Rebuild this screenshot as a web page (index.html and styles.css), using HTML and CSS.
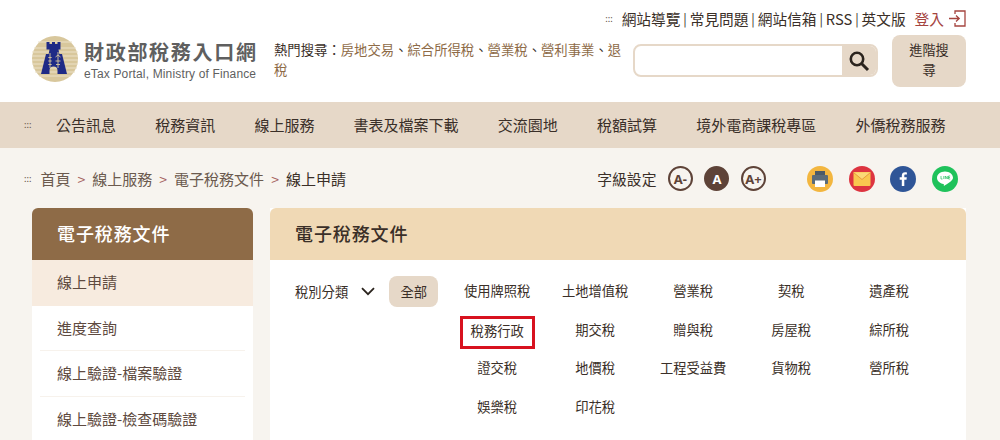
FILE: index.html
```html
<!DOCTYPE html>
<html lang="zh-Hant">
<head>
<meta charset="utf-8">
<title>電子稅務文件</title>
<link rel="stylesheet" href="styles.css">
</head>
<body>
<header class="header">
  <div class="toplinks">
    <span class="dots">:::</span>
    <a>網站導覽</a><i>|</i><a>常見問題</a><i>|</i><a>網站信箱</a><i>|</i><a>RSS</a><i>|</i><a>英文版</a>
    <span class="login">登入
      <svg width="17" height="17" viewBox="0 0 17 17" fill="none" stroke="#a5443f" stroke-width="1.3"><path d="M6 4V1h10v15H6v-3"/><path d="M0 8.500h10M7 5.500l3.200 3-3.200 3"/></svg>
    </span>
  </div>
  <div class="mainrow">
    <div class="logo">
      <svg width="46" height="46" viewBox="0 0 46 46">
        <circle cx="23" cy="23" r="23" fill="#d8c79c"/>
        <path d="M6 6h34M2 12h42M0 16h46M0 20h46M0 24h46M0 28h46M1 32h44M3 36h40M7 40h32" stroke="#ebe2c8" stroke-width="1.100"/>
        <path d="M14.500 6h3v2h2.500V6h3v2h2.500V6h3v7.500h-2l.8 4.500h2.700l5 20H25.500v-3.500a4 4 0 0 0-8 0V38H9l5-20h2.700l.8-4.500h-3z" fill="#1e2a86"/>
        <path d="M18 17v15M16.300 21.500h3.400M16.300 25h3.400M16.300 28.500h3.400M26 16v16M23.500 21l2.500-2 2.500 2M23.500 25h5M24 28.500h4" stroke="#d8c79c" stroke-width=".9" fill="none"/>
      </svg>
      <div class="logotext">
        <strong>財政部稅務入口網</strong>
        <span>eTax Portal, Ministry of Finance</span>
      </div>
    </div>
    <p class="hot">熱門搜尋：<a>房地交易</a>、<a>綜合所得稅</a>、<a>營業稅</a>、<a>營利事業</a>、<a>退稅</a></p>
    <div class="search">
      <div class="field"></div>
      <div class="sbtn">
        <svg width="22" height="22" viewBox="0 0 22 22" fill="none" stroke="#2b241e"><circle cx="9" cy="9" r="6.200" stroke-width="2.600"/><path d="M13.500 13.500l6.500 6.500" stroke-width="3"/></svg>
      </div>
    </div>
    <div class="adv">進階搜尋</div>
  </div>
</header>
<nav class="nav">
  <span class="dots">:::</span>
  <a>公告訊息</a><a>稅務資訊</a><a>線上服務</a><a>書表及檔案下載</a><a>交流園地</a><a>稅額試算</a><a>境外電商課稅專區</a><a>外僑稅務服務</a>
</nav>
<div class="toolbar">
  <div class="crumbs">
    <span class="dots">:::</span>
    <a>首頁</a><b>&gt;</b><a>線上服務</a><b>&gt;</b><a>電子稅務文件</a><b>&gt;</b><span class="cur">線上申請</span>
  </div>
  <div class="tools">
    <span class="fontlabel">字級設定</span>
    <div class="sizes">
      <span class="size">A-</span><span class="size on">A</span><span class="size">A+</span>
    </div>
    <div class="share">
      <svg width="26" height="26" viewBox="0 0 26 26"><circle cx="13" cy="13" r="13" fill="#f3b63f"/><rect x="8" y="5" width="10" height="5" fill="#4a5a68"/><rect x="5" y="9" width="16" height="9" rx="1" fill="#5a6b79"/><rect x="8" y="14.500" width="10" height="6.500" fill="#fff"/></svg>
      <svg width="26" height="26" viewBox="0 0 26 26"><circle cx="13" cy="13" r="13" fill="#dd3440"/><rect x="4.500" y="6" width="17" height="14" rx="1" fill="#f9c74f"/><path d="M4.500 6.500l8.500 7 8.500-7" fill="#fbd977" stroke="#e89a3c" stroke-width="1"/></svg>
      <svg width="26" height="26" viewBox="0 0 26 26"><circle cx="13" cy="13" r="13" fill="#2f5597"/><path d="M14.300 20v-6.300h2.200l.3-2.500h-2.500V9.800c0-.7.2-1.200 1.200-1.200h1.400V6.400c-.3 0-1-.1-1.900-.1-1.900 0-3.200 1.200-3.200 3.300v1.600H9.700v2.500h2.100V20z" fill="#fff"/></svg>
      <svg width="26" height="26" viewBox="0 0 26 26"><circle cx="13" cy="13" r="13" fill="#1fc25b"/><path d="M13 5.500c-4.400 0-8 2.800-8 6.300 0 3.100 2.800 5.700 6.500 6.200.5.100.4.500.3 1.500 0 .3.200.4.500.2 2.600-1.500 8.700-4.900 8.700-7.900 0-3.500-3.600-6.300-8-6.300z" fill="#fff"/><path d="M9 10v3h1.500M11.800 10v3M13.300 13v-3l2 3v-3M18.200 10h-1.700v3h1.700M16.500 11.500h1.500" fill="none" stroke="#1fc25b" stroke-width=".7"/></svg>
    </div>
  </div>
</div>
<div class="content">
  <aside class="side">
    <h2 class="sidetitle">電子稅務文件</h2>
    <ul class="sidelist">
      <li class="active">線上申請</li>
      <li>進度查詢</li>
      <li>線上驗證-檔案驗證</li>
      <li>線上驗證-檢查碼驗證</li>
    </ul>
  </aside>
  <main class="panel">
    <h2 class="paneltitle">電子稅務文件</h2>
    <div class="filter">
      <div class="select">稅別分類
        <svg width="14" height="9" viewBox="0 0 14 9" fill="none" stroke="#2b241e" stroke-width="1.800"><path d="M1 1.200l6 6 6-6"/></svg>
      </div>
      <span class="all">全部</span>
      <div class="taxes">
        <a>使用牌照稅</a><a>土地增值稅</a><a>營業稅</a><a>契稅</a><a>遺產稅</a>
        <a><span class="mark">稅務行政</span></a><a>期交稅</a><a>贈與稅</a><a>房屋稅</a><a>綜所稅</a>
        <a>證交稅</a><a>地價稅</a><a>工程受益費</a><a>貨物稅</a><a>營所稅</a>
        <a>娛樂稅</a><a>印花稅</a>
      </div>
    </div>
  </main>
</div>
</body>
</html>
```

FILE: styles.css
```css
* { box-sizing: border-box; }
html, body { height: 100%; }
body {
  margin: 0;
  height: 440px;
  overflow: hidden;
  background: #f7f4ef;
  color: #3b2f28;
  font-family: "Noto Sans CJK TC", "Noto Sans", sans-serif;
}
h2, p, ul { margin: 0; padding: 0; }
ul { list-style: none; }

.dots { font-size: 9px; letter-spacing: 0; color: #6b5a4e; line-height: 1; }

.header { height: 102px; background: #fff; padding: 8px 34px 0 32px; }
.toplinks {
  display: flex;
  justify-content: flex-end;
  align-items: center;
  height: 20px;
  font-size: 14.700px;
  color: #3a2f28;
}
.toplinks .dots { margin-right: 9px; }
.toplinks i { width: 9.300px; font-style: normal; font-size: 13px; text-align: center; }
.login {
  display: flex;
  align-items: center;
  gap: 5px;
  margin-left: 9px;
  color: #a5443f;
}
.mainrow { display: flex; align-items: flex-start; margin-top: 7px; }
.logo { display: flex; align-items: center; gap: 6px; width: 242px; height: 46px; margin-top: 1px; }
.logotext { display: flex; flex-direction: column; color: #5f5f5f; }
.logotext strong { font-size: 20px; line-height: 29px; letter-spacing: 1.700px; font-weight: 700; white-space: nowrap; }
.logotext span { font: 12px/16px "Liberation Sans", sans-serif; letter-spacing: .15px; white-space: nowrap; }
.hot {
  width: 351px;
  margin-top: 5px;
  font-size: 13.350px;
  line-height: 20px;
  color: #3a2f28;
}
.hot a { color: #8e6b47; }
.search {
  display: flex;
  width: 245px;
  height: 33px;
  margin: 9px 14px 0 8px;
  border: 2px solid #e6d8c8;
  border-radius: 8px;
  overflow: hidden;
  background: #fff;
}
.field { flex: 1; }
.sbtn { width: 34px; background: #e6d8c8; display: flex; align-items: center; justify-content: center; }
.adv {
  width: 74px;
  height: 52px;
  padding: 5px 12px;
  background: #e6d8c8;
  border-radius: 8px;
  font-size: 13.200px;
  line-height: 20px;
  text-align: center;
  color: #3a2f28;
}

.nav {
  display: flex;
  align-items: center;
  gap: 39.200px;
  height: 46px;
  padding: 0 0 1px 24px;
  background: #e6d8c8;
  font-size: 15px;
  color: #3a2f28;
  white-space: nowrap;
}
.nav .dots { width: 8px; margin-right: -15.200px; }

.toolbar {
  display: flex;
  align-items: center;
  justify-content: space-between;
  height: 60px;
  padding: 1px 42px 0 24px;
}
.crumbs { display: flex; align-items: center; font-size: 15px; color: #6b5a4e; }
.crumbs .dots { margin-right: 9px; }
.crumbs b { font-weight: 400; color: #a5605c; font-size: 14px; margin: 0 7px; }
.crumbs .cur { color: #3a2f28; }
.tools { display: flex; align-items: center; }
.fontlabel { font-size: 14.800px; color: #3a2f28; }
.sizes { display: flex; gap: 11.500px; margin-left: 11.500px; }
.size {
  display: flex;
  align-items: center;
  justify-content: center;
  width: 25px;
  height: 25px;
  border: 2px solid #5e4338;
  border-radius: 50%;
  color: #5e4338;
  font: 700 13px "Noto Sans", sans-serif;
}
.size.on { background: #5e4338; color: #fff; }
.share { display: flex; gap: 15.700px; margin-left: 41px; }

.content { display: flex; gap: 17px; padding: 0 34px 0 32px; }
.side { width: 221px; flex: none; }
.sidetitle {
  height: 52px;
  padding-left: 25px;
  background: #8e6b47;
  border-radius: 6px 6px 0 0;
  color: #fff;
  font-size: 18px;
  font-weight: 500;
  line-height: 50px;
  letter-spacing: .9px;
}
.sidelist { background: #fff; height: 180px; }
.sidelist li {
  position: relative;
  height: 45.600px;
  padding-left: 25px;
  font-size: 15px;
  line-height: 43px;
  color: #5e4a40;
}
.sidelist li.active { background: #f7ebdf; }
.sidelist li + li:not(:last-child)::after {
  content: "";
  position: absolute;
  left: 8px;
  right: 8px;
  bottom: 0;
  height: 1px;
  background: #f7f2ec;
}
.panel { flex: 1; background: #fff; height: 232px; }
.paneltitle {
  height: 52px;
  padding-left: 25px;
  background: #f0d9b5;
  border-radius: 6px 6px 0 0;
  font-size: 18px;
  font-weight: 500;
  line-height: 50px;
  letter-spacing: .9px;
  color: #3a2f28;
}
.filter { display: flex; align-items: flex-start; padding: 16px 0 0 25px; }
.select {
  display: flex;
  align-items: center;
  gap: 13px;
  height: 31px;
  font-size: 13.300px;
  color: #3a2f28;
}
.all {
  width: 49px;
  height: 31px;
  margin-left: 14px;
  background: #e6d8c8;
  border-radius: 8px;
  font-size: 13.300px;
  line-height: 31px;
  text-align: center;
  color: #3a2f28;
}
.taxes {
  display: grid;
  grid-template-columns: repeat(5, 98px);
  grid-auto-rows: 38.500px;
  margin-left: 10px;
  font-size: 13.300px;
  color: #3a2f28;
}
.taxes a { display: flex; align-items: center; justify-content: center; height: 29px; }
.mark { padding: 1px 8px 5px; border: 3px solid #d8121f; margin-top: 7px; line-height: 21px; }
```
